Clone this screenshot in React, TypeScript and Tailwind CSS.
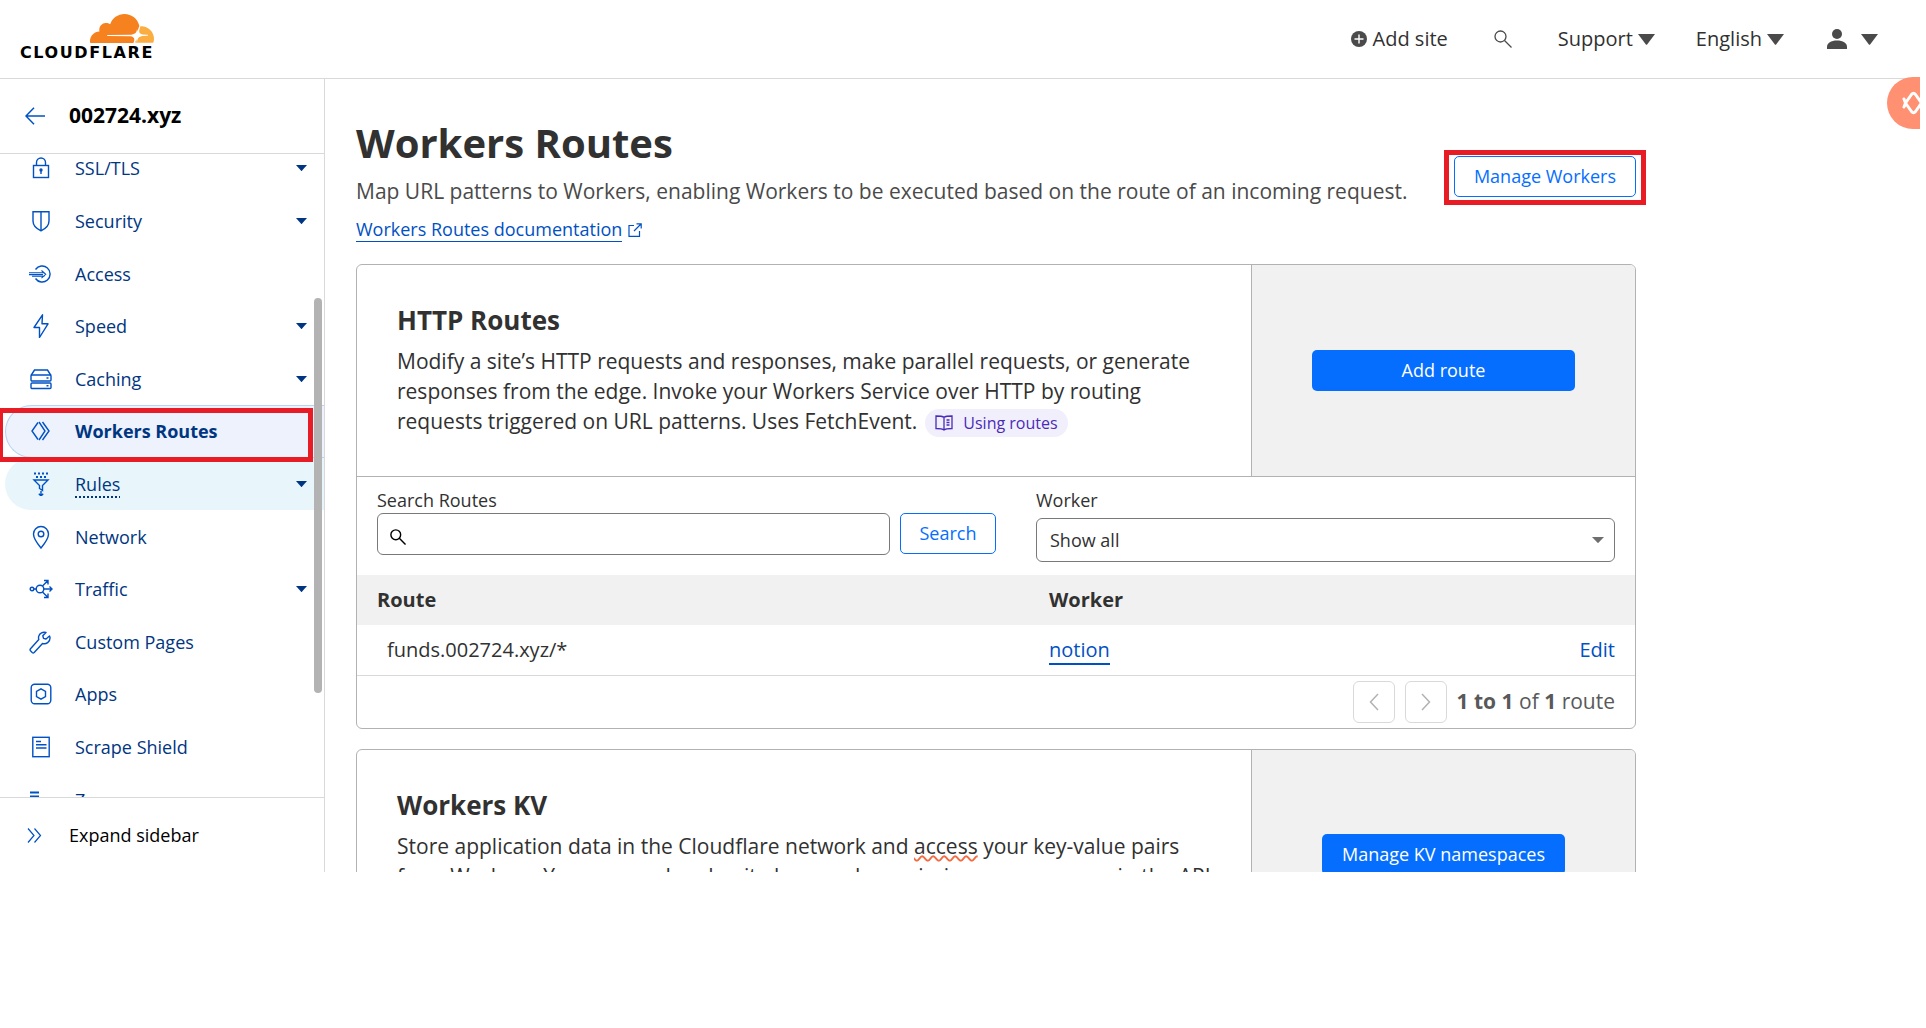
import React from "react";

type IconProps = { children: React.ReactNode; size?: string };

function LineIcon({ children, size = "size-6" }: IconProps) {
  return (
    <svg
      viewBox="0 0 24 24"
      className={size}
      fill="none"
      stroke="currentColor"
      strokeWidth="1.4"
      aria-hidden="true"
    >
      {children}
    </svg>
  );
}

function Caret({ className }: { className: string }) {
  return (
    <svg viewBox="0 0 16 10" preserveAspectRatio="none" className={className} fill="currentColor" aria-hidden="true">
      <path d="M0 0h16L8.600 9.500q-.6.700-1.200 0z" />
    </svg>
  );
}

function SearchIcon({ className, width = 1.5 }: { className: string; width?: number }) {
  return (
    <svg viewBox="0 0 18 18" className={className} fill="none" stroke="currentColor" strokeWidth={width} aria-hidden="true">
      <circle cx="6.500" cy="6.500" r="5.500" />
      <path d="M10.500 10.500l7 7" />
    </svg>
  );
}

const icons = {
  lock: (
    <LineIcon>
      <rect x="4.500" y="9.500" width="15" height="12" />
      <path d="M7.500 9.500V6.500a4.500 4.500 0 0 1 9 0v3" />
      <circle cx="12" cy="14" r="1" fill="currentColor" />
      <path d="M12 14v4" />
    </LineIcon>
  ),
  shield: (
    <LineIcon>
      <path d="M4 2.700h16v9.300c0 4-3 7.500-8 9.800-5-2.300-8-5.800-8-9.800zM12 2.700v19" />
    </LineIcon>
  ),
  access: (
    <LineIcon>
      <path d="M6.500 7.500a8 8 0 1 1 0 9" />
      <path d="M0 10.800h15.500M0 12.600h14M3 14.200h12.500M12.500 8.500l4.200 3.800-4.200 3.800" strokeWidth="1.100" />
    </LineIcon>
  ),
  bolt: (
    <LineIcon>
      <path d="M13.500.800L5 13.500h5.500L10.500 23.500 19 9.800h-6z" strokeLinejoin="round" />
    </LineIcon>
  ),
  server: (
    <LineIcon>
      <path d="M2 8.500L5.500 3h13L22 8.500" />
      <rect x="2" y="8" width="20" height="6" rx="1" />
      <rect x="2" y="16" width="20" height="5.500" rx="1" />
      <path d="M17.500 11h2M17.500 18.700h2" />
    </LineIcon>
  ),
  workers: (
    <LineIcon>
      <path d="M9 3.500L3 12l6 8.500M10 3l6 9-6 9M13.500 3l6.500 9-6.500 9" />
    </LineIcon>
  ),
  funnel: (
    <LineIcon>
      <path d="M5 1.500h14M7 5h10" strokeDasharray="2 2" strokeWidth="2" />
      <path d="M5 8h14l-5.500 5.500v5l-3-2v-3z" />
      <path d="M12 19v5M9.800 21.800L12 24l2.200-2.200" />
    </LineIcon>
  ),
  pin: (
    <LineIcon>
      <path d="M12 23C7 17 4.500 13 4.500 9a7.500 7.500 0 0 1 15 0c0 4-2.500 8-7.500 14z" />
      <circle cx="12" cy="9" r="2.800" />
    </LineIcon>
  ),
  traffic: (
    <LineIcon>
      <circle cx="3" cy="12" r="1.800" />
      <circle cx="11" cy="12" r="3.800" />
      <path d="M5 12h2.200M14.800 12H23M20.500 9.500L23 12l-2.500 2.500M13.500 9L18.500 4M15 3.500h4v4M13.500 15l5 5M15 20.500h4v-4" />
    </LineIcon>
  ),
  wrench: (
    <LineIcon>
      <path
        d="M20.500 6l-3.500 3-2.500-.700-.700-2.500L17 2.500c-3-1-6.500.5-7.300 3.800-.3 1.200-.2 2.200.1 3.200L1.500 18.800a1.500 1.500 0 0 0 0 2l1.700 1.700a1.500 1.500 0 0 0 2 0l8.300-9c3.500 1.200 7.800-1.500 7.500-6z"
        strokeLinejoin="round"
      />
    </LineIcon>
  ),
  apps: (
    <LineIcon>
      <rect x="2.200" y="2.200" width="19.600" height="19.600" rx="3.500" />
      <path d="M12 6.800l4.500 2.600v5.200L12 17.200l-4.500-2.600V9.400z" />
    </LineIcon>
  ),
  page: (
    <LineIcon>
      <rect x="3.800" y="2.300" width="16.400" height="19.400" />
      <path d="M7 6.500h5M7 9.800h10.500M7 13h10.500" strokeWidth="1.600" />
    </LineIcon>
  ),
  zaraz: (
    <LineIcon>
      <path d="M1 4.500h9M1 8.500h9M6 12.500h14M12 17h10" strokeWidth="1.800" />
    </LineIcon>
  ),
};

type NavItem = {
  label: string;
  icon: React.ReactNode;
  expands?: boolean;
  state?: "current" | "hover";
};

const navItems: NavItem[] = [
  { label: "SSL/TLS", icon: icons.lock, expands: true },
  { label: "Security", icon: icons.shield, expands: true },
  { label: "Access", icon: icons.access },
  { label: "Speed", icon: icons.bolt, expands: true },
  { label: "Caching", icon: icons.server, expands: true },
  { label: "Workers Routes", icon: icons.workers, state: "current" },
  { label: "Rules", icon: icons.funnel, expands: true, state: "hover" },
  { label: "Network", icon: icons.pin },
  { label: "Traffic", icon: icons.traffic, expands: true },
  { label: "Custom Pages", icon: icons.wrench },
  { label: "Apps", icon: icons.apps },
  { label: "Scrape Shield", icon: icons.page },
  { label: "Zaraz", icon: icons.zaraz, expands: true },
];

function NavRow({ item }: { item: NavItem }) {
  const base = "ml-[5px] flex h-full items-center rounded-l-full border border-r-0 pl-[23px] pr-[17px] text-[#003681] ";
  const tone =
    item.state === "current"
      ? "border-[#b9d3f0] bg-[#edf2fd] font-bold"
      : item.state === "hover"
        ? "border-transparent bg-[#e8f6fb]"
        : "border-transparent";
  return (
    <li className={item.state === "current" ? "relative z-10 min-h-0 flex-1" : "relative min-h-0 flex-1"}>
      <a href="#" className={base + tone}>
        <span className="mr-[22px] text-[#0051c3]">{item.icon}</span>
        <span
          className={
            item.state === "hover"
              ? "leading-6 underline decoration-dotted decoration-2 underline-offset-[6px]"
              : "leading-6"
          }
        >
          {item.label}
        </span>
        {item.expands && <Caret className="ml-auto h-[6px] w-[11px]" />}
      </a>
      {item.state === "current" && (
        <span className="pointer-events-none absolute -left-[2px] top-[3px] h-[54px] w-[315px] border-[5px] border-[#e81c24]" />
      )}
    </li>
  );
}

function Logo() {
  return (
    <a href="#" aria-label="Cloudflare home" className="ml-5 flex w-[134px] flex-col items-end pt-[14px]">
      <svg viewBox="0 0 256 116" className="h-[29px] w-[64px]" aria-hidden="true">
        <path
          fill="#f6821f"
          d="M176.332 108.348c1.593-5.310 1.062-10.622-1.593-13.809-2.656-3.187-6.374-5.310-11.154-5.842L71.170 87.634c-.531 0-1.062-.530-1.593-.530-.531-.532-.531-1.063 0-1.594.531-1.062 1.062-1.594 2.124-1.594l92.946-1.062c11.154-.530 22.839-9.560 27.087-20.182l5.312-13.809c0-.532.531-1.063 0-1.594C191.203 20.182 166.772 0 138.091 0 111.535 0 88.697 16.995 80.730 40.896c-5.311-3.718-11.684-5.843-19.120-5.310-12.747 1.061-22.838 11.683-24.432 24.430-.531 3.187 0 6.374.532 9.560C16.996 70.107 0 87.103 0 108.348c0 2.124 0 3.718.531 5.842 0 1.063 1.062 1.594 1.594 1.594h170.489c1.062 0 2.125-.530 2.125-1.594l1.593-5.842z"
        />
        <path
          fill="#fbad41"
          d="M205.544 48.863h-2.656c-.531 0-1.062.530-1.593 1.062l-3.718 12.747c-1.593 5.310-1.062 10.623 1.594 13.809 2.655 3.187 6.373 5.310 11.153 5.843l19.652 1.062c.530 0 1.062.530 1.593.530.530.532.530 1.063 0 1.594-.531 1.063-1.062 1.594-2.125 1.594l-20.182 1.062c-11.154.530-22.838 9.560-27.087 20.182l-1.063 4.780c-.531.532 0 1.594 1.063 1.594h70.108c1.062 0 1.593-.531 1.593-1.593 1.062-4.250 2.124-9.030 2.124-13.810 0-27.618-22.838-50.456-50.456-50.456"
        />
        <path
          fill="#fff"
          d="M188 60c2 17 6 23 30 26-24 3-28 9-30 30-2-21-6-27-22-28H70v-4h96c16-1 20-7 22-24z"
        />
      </svg>
      <span className="font-['DejaVu_Sans'] text-[16px] font-bold leading-5 tracking-widest text-black">
        CLOUDFLARE
      </span>
    </a>
  );
}

function Header() {
  return (
    <header className="flex h-[79px] shrink-0 border-b border-[#d9d9d9]">
      <Logo />
      <nav aria-label="Account" className="ml-auto flex items-center pr-[42px] text-[20px] text-[#313131]">
        <button type="button" className="flex items-center gap-[6px]">
          <svg viewBox="0 0 16 16" className="size-4" aria-hidden="true">
            <circle cx="8" cy="8" r="8" fill="#4a4a4a" />
            <path d="M8 3.500v9M3.500 8h9" stroke="#fff" strokeWidth="1.400" />
          </svg>
          Add site
        </button>
        <button type="button" aria-label="Search" className="ml-[46px] text-[#4a4a4a]">
          <SearchIcon className="size-[18px]" width={1.3} />
        </button>
        <button type="button" className="ml-[46px] flex items-center gap-[5px]">
          Support <Caret className="h-[11px] w-[17px] text-[#4a4a4a]" />
        </button>
        <button type="button" className="ml-[41px] flex items-center gap-[5px]">
          English <Caret className="h-[11px] w-[17px] text-[#4a4a4a]" />
        </button>
        <button type="button" aria-label="Profile" className="ml-[43px] flex items-center gap-[14px] text-[#4a4a4a]">
          <svg viewBox="0 0 20 20" className="size-5" fill="currentColor" aria-hidden="true">
            <circle cx="10" cy="5" r="5" />
            <path d="M0 20v-2c0-4 4-6.500 10-6.500S20 14 20 18v2z" />
          </svg>
          <Caret className="h-[11px] w-[17px]" />
        </button>
      </nav>
    </header>
  );
}

function Sidebar() {
  return (
    <aside className="flex w-[325px] shrink-0 flex-col border-r border-[#d9d9d9] text-[18px]">
      <div className="flex h-[75px] shrink-0 items-center gap-6 border-b border-[#d9d9d9] pl-[25px]">
        <a href="#" aria-label="Back" className="text-[#0051c3]">
          <svg viewBox="0 0 20 18" className="h-[18px] w-5" fill="none" stroke="currentColor" strokeWidth="1.500" aria-hidden="true">
            <path d="M20 9H1M9 .800L1 9l8 8.200" />
          </svg>
        </a>
        <span className="text-[21px] font-bold text-black">002724.xyz</span>
      </div>
      <nav aria-label="Site" className="relative min-h-0 flex-1 overflow-hidden">
        <ul className="-mt-3 flex h-[684px] flex-col">
          {navItems.map((item) => (
            <NavRow key={item.label} item={item} />
          ))}
        </ul>
        <span className="absolute right-[2px] top-[144px] z-20 h-[395px] w-2 rounded-full bg-[#b3b3b3]" />
      </nav>
      <button
        type="button"
        className="flex h-[75px] shrink-0 items-center gap-[27px] border-t border-[#d9d9d9] pl-[27px] text-black"
      >
        <svg viewBox="0 0 15 15" className="size-[15px] text-[#0051c3]" fill="none" stroke="currentColor" strokeWidth="1.200" aria-hidden="true">
          <path d="M1 .500l6 7-6 7M7.500.500l6 7-6 7" />
        </svg>
        Expand sidebar
      </button>
    </aside>
  );
}

type PanelProps = { title: string; text: React.ReactNode; action: React.ReactNode };

function PanelHead({ title, text, action }: PanelProps) {
  return (
    <div className="flex">
      <div className="flex-1 px-10 pb-[39px] pt-9">
        <h2 className="text-[26px] font-bold leading-[38px] text-[#313131]">{title}</h2>
        <p className="mt-[7px] text-[21px] leading-[30px] text-[#313131]">{text}</p>
      </div>
      <div className="flex w-[384px] items-center justify-center border-l border-[#b2b2b2] bg-[#f1f1f1]">
        {action}
      </div>
    </div>
  );
}

const pagerButton =
  "flex size-[42px] items-center justify-center rounded-md border border-[#d9d9d9] text-[#b2b2b2]";

function HttpRoutes() {
  return (
    <section className="overflow-hidden rounded-md border border-[#b2b2b2]">
      <PanelHead
        title="HTTP Routes"
        text={
          <>
            Modify a site’s HTTP requests and responses, make parallel requests, or generate
            <br />
            responses from the edge. Invoke your Workers Service over HTTP by routing
            <br />
            requests triggered on URL patterns. Uses FetchEvent.
            <a
              href="#"
              className="ml-2 inline-flex h-7 items-center gap-[10px] rounded-full bg-[#f1effc] px-[10px] align-middle text-[16px] text-[#4a2bb8]"
            >
              <svg viewBox="0 0 18 16" className="h-4 w-[18px]" fill="none" stroke="currentColor" strokeWidth="1.300" aria-hidden="true">
                <path d="M9 2.300C7.500 1.200 4 1 1 1v12.500c3 0 6.500.2 8 1.500 1.500-1.300 5-1.500 8-1.500V1c-3 0-6.500.2-8 1.300zM9 2.300V15M11.500 5h3M11.500 7.500h3M11.500 10h3" />
              </svg>
              Using routes
            </a>
          </>
        }
        action={
          <button type="button" className="h-[41px] w-[263px] rounded-[5px] bg-[#056eff] text-[18px] text-white">
            Add route
          </button>
        }
      />
      <div className="flex gap-10 border-t border-[#b2b2b2] px-5 pb-[13px] pt-[10px] text-[18px] text-[#313131]">
        <form className="flex-[619]">
          <label htmlFor="route-search" className="block leading-[26px]">
            Search Routes
          </label>
          <div className="flex gap-[10px]">
            <div className="relative flex-1">
              <input
                id="route-search"
                type="text"
                className="block h-[42px] w-full rounded-md border border-[#797979] pl-10 pr-3"
              />
              <SearchIcon className="pointer-events-none absolute bottom-[10px] left-[13px] size-4 text-black" width={1.6} />
            </div>
            <button type="button" className="h-[41px] w-24 rounded-[5px] border border-[#056eff] text-[#056eff]">
              Search
            </button>
          </div>
        </form>
        <div className="flex-[579]">
          <label htmlFor="worker" className="block leading-[26px]">
            Worker
          </label>
          <div className="relative mt-[5px]">
            <select id="worker" className="block h-11 w-full appearance-none rounded-md border border-[#797979] pl-[13px]">
              <option>Show all</option>
            </select>
            <Caret className="pointer-events-none absolute right-[11px] top-[19px] h-[6px] w-3 text-[#6e6e6e]" />
          </div>
        </div>
      </div>
      <table className="w-full text-left text-[20px] text-[#313131]">
        <thead className="bg-[#f1f1f1]">
          <tr className="h-[50px]">
            <th className="w-[672px] pl-5 font-bold">Route</th>
            <th className="pl-5 font-bold">Worker</th>
            <th aria-label="Actions" />
          </tr>
        </thead>
        <tbody>
          <tr className="h-[50px] border-b border-[#d9d9d9]">
            <td className="pl-[30px]">funds.002724.xyz/*</td>
            <td className="pl-5">
              <a href="#" className="inline-block border-b-2 border-[#0051c3] leading-[26px] text-[#0051c3]">
                notion
              </a>
            </td>
            <td className="pr-5 text-right">
              <a href="#" className="text-[#0051c3]">
                Edit
              </a>
            </td>
          </tr>
        </tbody>
      </table>
      <div className="flex items-center justify-end gap-[10px] py-[5px] pr-5">
        <button type="button" aria-label="Previous page" className={pagerButton}>
          <svg viewBox="0 0 10 18" className="h-[18px] w-[10px]" fill="none" stroke="currentColor" strokeWidth="1.500" aria-hidden="true">
            <path d="M9 1L1.500 9 9 17" />
          </svg>
        </button>
        <button type="button" aria-label="Next page" className={pagerButton}>
          <svg viewBox="0 0 10 18" className="h-[18px] w-[10px]" fill="none" stroke="currentColor" strokeWidth="1.500" aria-hidden="true">
            <path d="M1 1l7.500 8L1 17" />
          </svg>
        </button>
        <p className="text-[21px] text-[#595959]">
          <b>1 to 1</b> of <b>1</b> route
        </p>
      </div>
    </section>
  );
}

function WorkersKv() {
  return (
    <section className="mt-5 overflow-hidden rounded-md border border-[#b2b2b2]">
      <PanelHead
        title="Workers KV"
        text={
          <>
            Store application data in the Cloudflare network and{" "}
            <span className="underline decoration-[#f4693f] decoration-wavy decoration-2 underline-offset-1 [text-decoration-skip-ink:none]">
              access
            </span>{" "}
            your key-value pairs
            <br />
            from Workers. You can read and write keys and permissions namespaces in the API
            <br />
            or here.
          </>
        }
        action={
          <button type="button" className="h-[41px] rounded-[5px] bg-[#056eff] px-5 text-[18px] text-white">
            Manage KV namespaces
          </button>
        }
      />
    </section>
  );
}

export default function App() {
  return (
    <div className="h-screen bg-white pb-[156px] pr-[6px] font-['Open_Sans','Noto_Sans',sans-serif]">
      <div className="relative flex h-full flex-col overflow-hidden">
        <Header />
        <div className="flex min-h-0 flex-1">
          <Sidebar />
          <main className="min-w-0 flex-1 overflow-hidden pl-[31px]">
            <div className="max-w-[1280px]">
              <div className="flex h-[185px] items-start justify-between pt-[39px]">
                <div>
                  <h1 className="text-[40px] font-bold leading-[50px] text-[#313131]">Workers Routes</h1>
                  <p className="mt-2 text-[21px] leading-[30px] text-[#4a4a4a]">
                    Map URL patterns to Workers, enabling Workers to be executed based on the route of an incoming
                    request.
                  </p>
                  <a href="#" className="mt-[11px] flex items-center gap-[6px] text-[18px] text-[#0051c3]">
                    <span className="border-b border-[#0051c3] leading-[24px]">Workers Routes documentation</span>
                    <svg viewBox="0 0 14 14" className="size-[14px]" fill="none" stroke="currentColor" strokeWidth="1.200" aria-hidden="true">
                      <path d="M6 2.500H1v10.800h10.500V8M8.500.800h4.700v4.700M13 1L6 8" />
                    </svg>
                  </a>
                </div>
                <div className="-mr-[10px] mt-8 border-[5px] border-[#e81c24] pb-[3px] pl-[5px] pr-[5px] pt-px">
                  <button
                    type="button"
                    className="h-[41px] whitespace-nowrap rounded-[5px] border border-[#056eff] px-[19px] text-[18px] text-[#056eff]"
                  >
                    Manage Workers
                  </button>
                </div>
              </div>
              <HttpRoutes />
              <WorkersKv />
            </div>
          </main>
        </div>
        <button
          type="button"
          aria-label="Open assistant"
          className="absolute right-0 top-[77px] flex h-[52px] w-[33px] items-center overflow-hidden rounded-l-full bg-[#ff9071] pl-[15px]"
        >
          <svg viewBox="0 0 24 26" className="h-[26px] w-6 shrink-0" fill="none" stroke="#fff" strokeWidth="3" strokeLinejoin="round" strokeLinecap="round" aria-hidden="true">
            <path d="M3.500 13l6-8.500q2-2.500 4 0l6 8.500-6 8.500q-2 2.500-4 0zM2 9l1.500 4L2 17" />
          </svg>
        </button>
      </div>
    </div>
  );
}
